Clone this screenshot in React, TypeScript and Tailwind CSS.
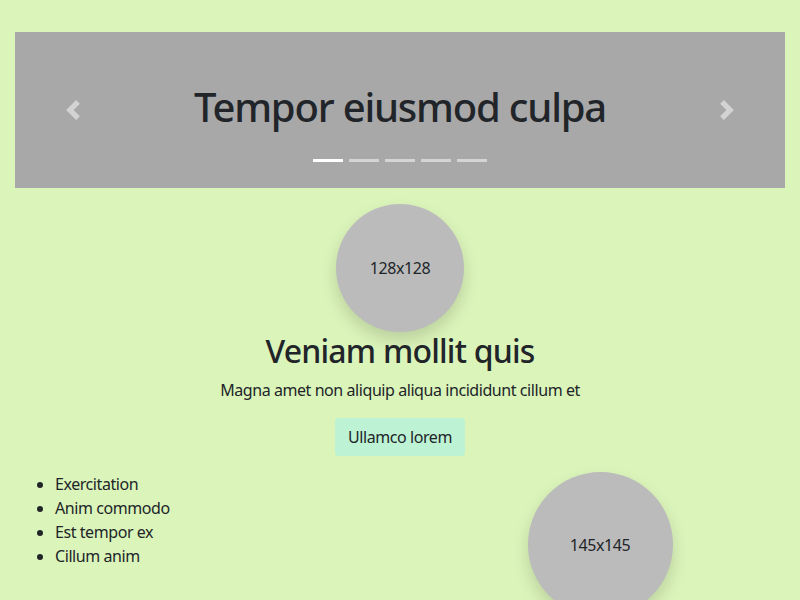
import React from "react";

const font = { fontFamily: '"Noto Sans", "Open Sans", sans-serif' };

function Chevron({ dir }: { dir: "left" | "right" }) {
  return (
    <svg width="20" height="20" viewBox="0 0 8 8" fill="#fff">
      {dir === "left" ? (
        <path d="M5.25 0l-4 4 4 4 1.5-1.5L4.25 4l2.5-2.5L5.25 0z" />
      ) : (
        <path d="M2.75 0l-1.5 1.5L3.75 4l-2.5 2.5L2.75 8l4-4-4-4z" />
      )}
    </svg>
  );
}

export default function App() {
  return (
    <div
      className="min-h-screen bg-[#dbf4ba] text-[#212529] pt-8 px-[15px] text-[16px] leading-6 tracking-[-0.027em]"
      style={font}
    >
      <div className="relative h-[156px] bg-[#a8a8a8] flex items-center justify-center pb-[6px]">
        <h1 className="text-[40px] leading-[1.2] font-medium tracking-[-0.03em]">Tempor eiusmod culpa</h1>
        <div className="absolute left-0 top-0 bottom-0 w-[15%] flex items-center justify-center opacity-50">
          <Chevron dir="left" />
        </div>
        <div className="absolute right-0 top-0 bottom-0 w-[15%] flex items-center justify-center opacity-50">
          <Chevron dir="right" />
        </div>
        <div className="absolute left-0 right-0 bottom-[26px] flex justify-center gap-[6px]">
          <span className="w-[30px] h-[3px] bg-white" />
          <span className="w-[30px] h-[3px] bg-white opacity-50" />
          <span className="w-[30px] h-[3px] bg-white opacity-50" />
          <span className="w-[30px] h-[3px] bg-white opacity-50" />
          <span className="w-[30px] h-[3px] bg-white opacity-50" />
        </div>
      </div>

      <div className="flex flex-col items-center mt-4">
        <div className="w-32 h-32 rounded-full bg-[#bbbbbb] flex items-center justify-center shadow-[0_8px_16px_rgba(0,0,0,0.15)]">
          128x128
        </div>
        <h2 className="text-[32px] leading-[1.2] font-medium mb-2 tracking-[-0.025em]">Veniam mollit quis</h2>
        <p className="mb-4">Magna amet non aliquip aliqua incididunt cillum et</p>
        <button className="bg-[#bdf3d4] rounded px-3 py-1.5 border border-transparent">Ullamco lorem</button>
      </div>

      <div className="grid grid-cols-2 gap-[30px] mt-4">
        <ul className="list-disc pl-10">
          <li>Exercitation</li>
          <li>Anim commodo</li>
          <li>Est tempor ex</li>
          <li>Cillum anim</li>
        </ul>
        <div className="flex justify-center">
          <div className="w-[145px] h-[145px] rounded-full bg-[#bbbbbb] flex items-center justify-center shadow-[0_8px_16px_rgba(0,0,0,0.15)]">
            145x145
          </div>
        </div>
      </div>
    </div>
  );
}
